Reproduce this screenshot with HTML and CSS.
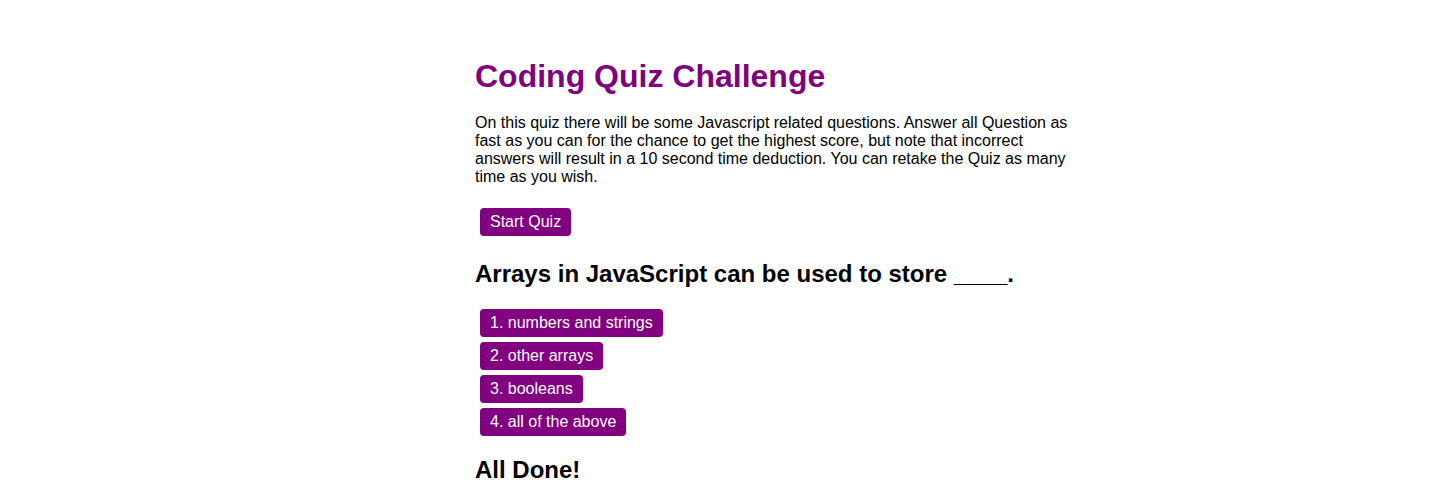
FILE: index.html
```html
<!DOCTYPE html>
<html lang="en">
<head>
<meta charset="utf-8">
<title>Coding Quiz Challenge</title>
<link rel="stylesheet" href="styles.css">
</head>
<body>
<main class="quiz">
  <section class="intro">
    <h1 class="title">Coding Quiz Challenge</h1>
    <p class="lead">On this quiz there will be some Javascript related questions. Answer all Question as fast as you can for the chance to get the highest score, but note that incorrect answers will result in a 10 second time deduction. You can retake the Quiz as many time as you wish.</p>
    <button class="btn">Start Quiz</button>
  </section>
  <section class="question">
    <h2 class="heading">Arrays in JavaScript can be used to store ____.</h2>
    <div class="answers">
      <button class="btn">1. numbers and strings</button>
      <button class="btn">2. other arrays</button>
      <button class="btn">3. booleans</button>
      <button class="btn">4. all of the above</button>
    </div>
  </section>
  <section class="done">
    <h2 class="heading">All Done!</h2>
  </section>
</main>
</body>
</html>
```

FILE: styles.css
```css
html, body {
  margin: 0;
  padding: 0;
  background: #ffffff;
}

body {
  font-family: "Liberation Sans", Arial, Helvetica, sans-serif;
  color: #000000;
}

.quiz {
  width: 600px;
  padding: 58px 0 0 475px;
}

.title {
  margin: 0 0 19px;
  font-size: 32px;
  font-weight: bold;
  color: #800080;
}

.lead {
  margin: 0;
  font-size: 16px;
  line-height: 18px;
}

.btn {
  display: block;
  margin: 0 0 0 5px;
  padding: 0 10px;
  height: 28px;
  border: none;
  border-radius: 4px;
  background: #800080;
  color: #ffffff;
  font-family: "Liberation Sans", Arial, Helvetica, sans-serif;
  font-size: 16px;
  cursor: pointer;
}

.intro .btn {
  margin-top: 22px;
}

.heading {
  margin: 24px 0 0;
  font-size: 24px;
  font-weight: bold;
}

.answers {
  display: flex;
  flex-direction: column;
  align-items: flex-start;
  gap: 5px;
  margin-top: 21px;
}

.done .heading {
  margin-top: 20px;
}
```
